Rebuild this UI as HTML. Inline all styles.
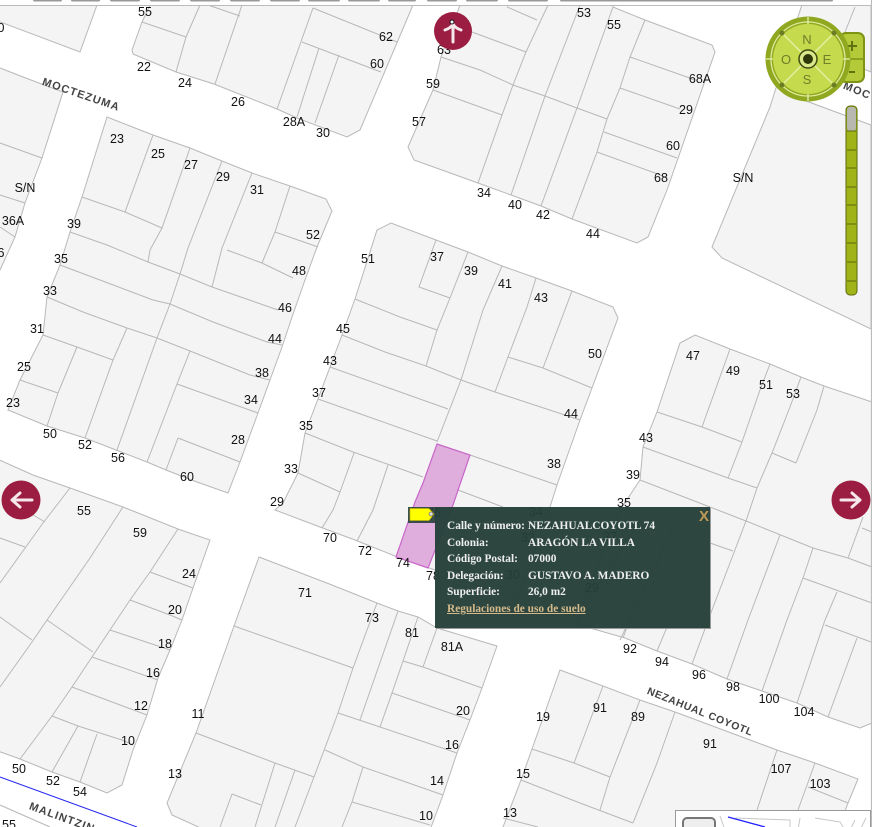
<!DOCTYPE html>
<html><head><meta charset="utf-8"><style>
html,body{margin:0;padding:0;background:#fff;width:877px;height:827px;overflow:hidden}
#w{position:relative;width:877px;height:827px;overflow:hidden;background:#fff}
svg{position:absolute;left:0;top:0}
.b{fill:#f4f4f4;stroke:#b8b8b8;stroke-width:1}
.l{fill:none;stroke:#b8b8b8;stroke-width:1}
.map{filter:blur(.3px)}
text.n{font:12.5px "Liberation Sans",sans-serif;fill:#111;text-anchor:middle;dominant-baseline:central}
text.s{font:bold 11px "Liberation Sans",sans-serif;fill:#444;letter-spacing:1.1px;text-anchor:middle;dominant-baseline:central}
#p{position:absolute;left:435px;top:507px;width:275px;height:121px;background:rgba(36,63,56,.96);box-shadow:1px 1px 0 #999;font:bold 11.35px "Liberation Serif",serif;color:#eee}
#p div{position:absolute;white-space:nowrap;line-height:14px}
#p .v{left:93px}#p .k{left:12px}
#p a{color:#d4b98a;text-decoration:underline}
</style></head><body><div id="w">
<svg width="877" height="827" viewBox="0 0 877 827">
<g class="map">
<g>
<path class="b" d="M-5 20L80 52L97 5H-5Z"/>
<path class="b" d="M150 5L142 22L132 50L133 54L176 72L214 84L277 109L297 118L347 137L360 130L413 5Z"/>
<path class="l" d="M142 22L186 37L200 5M208 5L240 16M242 5L215 84M186 37L176 72M313 8L277 109M302 42L381 72M319 48L297 117M339 55L315 123M313 8L397 42"/>
<path class="b" d="M460 5L441 57L433 90L408 147L414 160L478 183L511 195L541 206L572 219L637 243L648 237L667 190L715 52L712 45L645 20L613 7V5Z"/>
<path class="l" d="M441 57L480 70L513 85L545 96L577 108L607 119M472 32L526 52M507 7L537 20M548 5L526 52L513 85L502 115L478 183M580 5L545 96L511 195M613 7L577 108L541 206M645 20L630 57L620 88L607 119L597 152L572 219M630 57L687 77L694 80M620 88L680 109M604 132L677 158M597 152L655 173L667 178M433 90L480 107L502 115"/>
<path class="b" d="M802 5L770 107L712 247L722 258L871 329V125L790 95L800 40L855 5Z"/>
<path class="b" d="M802 5L790 40L871 72V5Z"/>
<path class="l" d="M855 7L843 37"/>
<path class="b" d="M-5 66L23 77L63 92L42 158L25 203L15 237L0 270H-5Z"/>
<path class="l" d="M0 143L42 158M0 195L25 203M0 227L15 237"/>
<path class="b" d="M107 117L153 135L190 148L222 161L252 173L290 186L326 199L332 211L317 247L305 280L292 317L282 347L270 380L258 413L240 462L228 493L197 482L166 470L147 462L116 450L85 438L47 426L8 410L20 380L43 335L47 297L60 265L70 232L82 197Z"/>
<path class="l" d="M82 197L125 212L162 228M70 232L107 245L148 262L180 274L212 287L278 310M60 265L100 280L153 300L170 304L213 322L267 342L282 345M47 297L83 312L127 328L157 338L190 351L250 375L270 380M43 335L77 347L113 360M20 380L58 393M77 347L58 393L47 426M127 328L113 360L85 438M180 274L170 304L157 338L117 450M190 351L177 384L147 462M177 384L258 413M178 438L166 470M178 438L240 462M227 250L262 263L293 278M153 135L125 212M190 148L162 228L150 250L148 262M222 161L188 248L180 274M252 173L222 248L212 287M290 186L275 232L262 263M275 232L318 247"/>
<path class="b" d="M-5 458L33 475L70 488L123 507L178 529L210 540L193 588L182 620L170 650L158 678L147 715L133 750L122 785L107 793L80 782L52 772L20 759L-5 750Z"/>
<path class="l" d="M70 488L43 523L0 583M33 515L45 522M0 538L25 547M123 507L90 558L47 620L32 642L0 687M0 617L32 640M47 620L93 652M178 529L150 572L130 600L110 630L92 657L72 687L52 716L20 759M150 572L193 588M130 600L170 615L182 620M110 630L170 650M92 657L158 680M72 687L147 715M52 716L78 726L122 740L133 745M78 726L52 772M97 734L80 782"/>
<path class="l" d="M0 805L50 827"/>
<path fill="none" stroke="#2a2af0" stroke-width="1" d="M0 777L137 827"/>
<path class="b" d="M259 557L332 585L377 603L398 611L418 617L437 628L497 646L482 688L470 720L457 753L443 795L430 830H205L172 815L167 803L196 733L234 626Z"/>
<path class="l" d="M234 626L353 668M196 733L275 763L314 777M377 603L353 668L338 713L314 777L295 827M398 611L360 720M418 617L403 661L392 693L380 727M437 628L423 667M403 661L423 667L482 688M392 693L470 720M338 713L380 727L457 753M325 750L363 767L443 795M363 767L352 802L342 827M352 802L430 825M275 763L255 827M295 770L275 827M232 794L261 805M232 794L220 827"/>
<path class="b" d="M377 230L391 223L436 240L468 252L502 266L536 278L572 291L613 307L618 318L592 388L580 420L557 485L550 507L516 600L435 570L395 556L355 540L320 527L275 510L283 503L298 473L305 433L318 399L330 367L342 335L355 299Z"/>
<path class="l" d="M436 240L419 287L450 298M468 252L450 298L437 330L426 366M355 299L400 317L437 330M502 266L483 310L461 380L437 442M536 278L527 307L508 357L495 392M572 291L543 368M508 357L543 368L592 388M342 335L385 352L426 366L461 380L495 392L580 420M330 367L448 409M318 399L437 441M305 433L353 452L390 465L423 477M470 455L557 485M458 490L503 507M298 473L340 492M354 453L340 492L333 510L322 528M388 465L373 510L357 541"/>
<path class="b" d="M680 343L695 335L730 349L770 364L801 377L824 386L872 402V723L860 728L828 717L797 703L762 691L727 679L692 664L657 651L625 638L590 628L576 622L620 510L640 480L643 447L657 412Z"/>
<path class="l" d="M730 349L702 427M770 364L760 390L742 442L728 478M657 412L702 427L742 442M801 377L790 407L772 453L757 488L746 521L712 610L692 664M824 386L817 410L796 463M772 453L796 463M643 447L728 478L757 488M640 480L710 507L746 521L813 548L848 558L872 567M710 543L733 551M780 535L748 620L727 679M813 548L803 578L787 620L762 691M803 578L872 603M837 592L825 620L797 703M848 558L863 517M862 528L872 532M825 625L871 642M857 638L828 717M670 620L657 651M627 627L623 638M640 520L575 622M672 530L620 640"/>
<path class="b" d="M560 670L603 686L640 700L675 712L777 750L815 763L858 779L848 803L838 830H500L503 827L521 780L532 749Z"/>
<path class="l" d="M532 749L574 763L610 777M603 686L574 763M640 700L610 777L600 810M675 712L657 763L633 823M521 780L580 803L633 823M503 818L538 827M777 750L757 810M815 763L798 810M808 787L848 803"/>
<path fill="#dfaedd" stroke="#c966c9" stroke-width="1.2" d="M437 444L470 455L453 505L428 568L396 557L415 502L423 483Z"/>
</g>
<g>
<text class="n" x="1" y="28">0</text><text class="n" x="145" y="12">55</text><text class="n" x="144" y="67">22</text><text class="n" x="185" y="83">24</text><text class="n" x="238" y="102">26</text><text class="n" x="294" y="122">28A</text><text class="n" x="323" y="133">30</text><text class="n" x="386" y="37">62</text><text class="n" x="377" y="64">60</text>
<text class="n" x="584" y="13">53</text><text class="n" x="614" y="25">55</text><text class="n" x="700" y="79">68A</text><text class="n" x="433" y="84">59</text><text class="n" x="419" y="122">57</text><text class="n" x="686" y="110">29</text><text class="n" x="673" y="146">60</text><text class="n" x="661" y="178">68</text><text class="n" x="484" y="193">34</text><text class="n" x="515" y="205">40</text><text class="n" x="543" y="215">42</text><text class="n" x="593" y="234">44</text><text class="n" x="444" y="50">63</text>
<text class="n" x="25" y="188">S/N</text><text class="n" x="13" y="221">36A</text><text class="n" x="117" y="139">23</text><text class="n" x="158" y="154">25</text><text class="n" x="191" y="165">27</text><text class="n" x="223" y="177">29</text><text class="n" x="257" y="190">31</text><text class="n" x="74" y="224">39</text><text class="n" x="313" y="235">52</text><text class="n" x="299" y="271">48</text><text class="n" x="285" y="308">46</text><text class="n" x="275" y="339">44</text><text class="n" x="262" y="373">38</text><text class="n" x="251" y="400">34</text><text class="n" x="238" y="440">28</text><text class="n" x="187" y="477">60</text><text class="n" x="118" y="458">56</text><text class="n" x="85" y="445">52</text><text class="n" x="50" y="434">50</text><text class="n" x="13" y="403">23</text><text class="n" x="24" y="367">25</text><text class="n" x="37" y="329">31</text><text class="n" x="50" y="291">33</text><text class="n" x="61" y="259">35</text><text class="n" x="1" y="253">6</text>
<text class="n" x="368" y="259">51</text><text class="n" x="437" y="257">37</text><text class="n" x="471" y="271">39</text><text class="n" x="505" y="284">41</text><text class="n" x="541" y="298">43</text><text class="n" x="595" y="354">50</text><text class="n" x="343" y="329">45</text><text class="n" x="330" y="361">43</text><text class="n" x="319" y="393">37</text><text class="n" x="306" y="426">35</text><text class="n" x="291" y="469">33</text><text class="n" x="277" y="502">29</text><text class="n" x="571" y="414">44</text><text class="n" x="554" y="464">38</text><text class="n" x="330" y="538">70</text><text class="n" x="365" y="551">72</text><text class="n" x="403" y="563">74</text><text class="n" x="433" y="576">78</text><text class="n" x="536" y="512">34</text><text class="n" x="528" y="538">32</text><text class="n" x="513" y="575">30</text><text class="n" x="592" y="588">29</text><text class="n" x="610" y="537">37</text><text class="n" x="434" y="513">76</text>
<text class="n" x="743" y="178">S/N</text><text class="n" x="693" y="356">47</text><text class="n" x="733" y="371">49</text><text class="n" x="766" y="385">51</text><text class="n" x="793" y="394">53</text><text class="n" x="646" y="438">43</text><text class="n" x="633" y="475">39</text><text class="n" x="624" y="503">35</text>
<text class="n" x="84" y="511">55</text><text class="n" x="140" y="533">59</text><text class="n" x="189" y="574">24</text><text class="n" x="175" y="610">20</text><text class="n" x="165" y="644">18</text><text class="n" x="153" y="673">16</text><text class="n" x="141" y="706">12</text><text class="n" x="128" y="741">10</text><text class="n" x="19" y="769">50</text><text class="n" x="53" y="781">52</text><text class="n" x="80" y="792">54</text><text class="n" x="9" y="825">55</text>
<text class="n" x="305" y="593">71</text><text class="n" x="372" y="618">73</text><text class="n" x="412" y="633">81</text><text class="n" x="452" y="647">81A</text><text class="n" x="463" y="711">20</text><text class="n" x="452" y="745">16</text><text class="n" x="437" y="781">14</text><text class="n" x="426" y="816">10</text><text class="n" x="198" y="714">11</text><text class="n" x="175" y="774">13</text>
<text class="n" x="630" y="649">92</text><text class="n" x="662" y="662">94</text><text class="n" x="699" y="675">96</text><text class="n" x="733" y="687">98</text><text class="n" x="769" y="699">100</text><text class="n" x="804" y="712">104</text><text class="n" x="543" y="717">19</text><text class="n" x="600" y="708">91</text><text class="n" x="638" y="717">89</text><text class="n" x="710" y="744">91</text><text class="n" x="523" y="774">15</text><text class="n" x="510" y="813">13</text><text class="n" x="781" y="769">107</text><text class="n" x="820" y="784">103</text>
<text class="s" transform="translate(81 95) rotate(19)">MOCTEZUMA</text>
<text class="s" transform="translate(700 712) rotate(22)" style="font-size:10.5px;letter-spacing:.6px">NEZAHUAL COYOTL</text>
<text class="s" transform="translate(62 818) rotate(20)">MALINTZIN</text>
<text class="s" transform="translate(857 91) rotate(22)">MOC</text>
</g>
</g>
<!-- frame and top tabs -->
<rect x="0" y="0" width="871" height="5" fill="#fff"/>
<path stroke="#bbb" stroke-width="1" d="M0 5.5H871"/>
<path stroke="#bbb" stroke-width="1.2" d="M871.5 0V827"/>
<rect x="872" y="0" width="5" height="827" fill="#fff"/>
<g fill="#999"><rect x="33" y="-2" width="29" height="3.5" rx="1.5"/><rect x="71" y="-2" width="29" height="3.5" rx="1.5"/><rect x="110" y="-2" width="30" height="3.5" rx="1.5"/><rect x="150" y="-2" width="30" height="3.5" rx="1.5"/><rect x="190" y="-2" width="30" height="3.5" rx="1.5"/><rect x="230" y="-2" width="30" height="3.5" rx="1.5"/><rect x="270" y="-2" width="30" height="3.5" rx="1.5"/><rect x="308" y="-2" width="32" height="3.5" rx="1.5"/><rect x="348" y="-2" width="32" height="3.5" rx="1.5"/><rect x="388" y="-2" width="28" height="3.5" rx="1.5"/><rect x="427" y="-2" width="30" height="3.5" rx="1.5"/><rect x="466" y="-2" width="32" height="3.5" rx="1.5"/><rect x="508" y="-2" width="40" height="3.5" rx="1.5"/><rect x="560" y="-2" width="273" height="3.5" rx="1.5"/></g>
<!-- nav buttons -->
<circle cx="453" cy="31" r="19" fill="#9b1e42"/>
<path fill="none" stroke="#f4e8ec" stroke-width="3" stroke-linecap="round" stroke-linejoin="round" d="M453 42V25M445 30Q451 28 453 24Q455 28 461 30"/>
<circle cx="452" cy="22" r="2" fill="#fff" stroke="#111"/>
<circle cx="21" cy="500" r="19.5" fill="#9b1e42"/>
<path fill="none" stroke="#f4e8ec" stroke-width="3" stroke-linecap="round" stroke-linejoin="round" d="M32 500H13M20 493L12 500L20 507"/>
<circle cx="851" cy="500" r="19.5" fill="#9b1e42"/>
<path fill="none" stroke="#f4e8ec" stroke-width="3" stroke-linecap="round" stroke-linejoin="round" d="M841 500H860M852 493L860 500L852 507"/>
<!-- compass -->
<rect x="840" y="33" width="24" height="49" rx="6" fill="#b4ca38" stroke="#7d9415" stroke-width="2"/>
<path stroke="#7d9415" stroke-width="1.5" d="M840 59H864"/>
<path stroke="#5f7210" stroke-width="2" d="M847 46H857M852 41V51M849 72H855"/>
<circle cx="808" cy="59" r="42.5" fill="#8fa81f"/>
<circle cx="808" cy="59" r="37" fill="none" stroke="#dfe99a" stroke-width="1.3"/>
<circle cx="808" cy="59" r="35" fill="#c5da4d"/>
<path stroke="#e8f0a8" stroke-width="1.3" d="M782 33L834 85M834 33L782 85M808 17V24M808 94V101M766 59H773M843 59H850"/>
<g fill="#6a7c24"><circle cx="782" cy="33" r="2.5"/><circle cx="834" cy="33" r="2.5"/><circle cx="782" cy="85" r="2.5"/><circle cx="834" cy="85" r="2.5"/></g>
<circle cx="808" cy="59" r="9" fill="#dbe88a" stroke="#3d4a10" stroke-width="1.5"/>
<circle cx="808" cy="59" r="5" fill="#2e3808"/>
<g font-family="Liberation Sans,sans-serif" font-size="13" fill="#6f7f2a" text-anchor="middle"><text x="807" y="44">N</text><text x="807" y="84">S</text><text x="786" y="64">O</text><text x="827" y="64">E</text></g>
<!-- slider -->
<rect x="846" y="106" width="11" height="189" rx="4" fill="#a0b318" stroke="#5a6a0a"/>
<rect x="847" y="107" width="9" height="24" rx="3" fill="#b8b8b0"/>
<path stroke="#5a6a0a" stroke-width="1" d="M847 131H856M847 150H856M847 168H856M847 187H856M847 205H856M847 224H856M847 243H856M847 262H856M847 281H856"/>
<!-- yellow tag -->
<rect x="408" y="507" width="28" height="16" fill="#27413a" opacity=".9"/>
<path fill="#ffff00" stroke="#c8b400" stroke-width=".6" d="M410 508.5H429L434 514L429 520.5H410Z"/>
<circle cx="431" cy="514" r="2" fill="#ddd" stroke="#555" stroke-width=".6"/>
<!-- minimap -->
<rect x="675.5" y="810.5" width="195" height="20" fill="#fff" stroke="#999"/>
<rect x="683" y="818" width="32" height="20" rx="4" fill="#eee" stroke="#777" stroke-width="2"/>
<path fill="none" stroke="#c8c8c8" d="M720 816L725 830M735 818L790 820V830M800 818L798 830M815 818L840 822L845 830M855 820L850 830M866 818L860 830"/>
<path fill="none" stroke="#22f" stroke-width="1.3" d="M728 817L765 827"/>
</svg>
<div id="p">
<div class="k" style="top:12px">Calle y número:</div><div class="v" style="top:12px">NEZAHUALCOYOTL 74</div>
<div class="k" style="top:29px">Colonia:</div><div class="v" style="top:29px">ARAGÓN LA VILLA</div>
<div class="k" style="top:45px">Código Postal:</div><div class="v" style="top:45px">07000</div>
<div class="k" style="top:62px">Delegación:</div><div class="v" style="top:62px">GUSTAVO A. MADERO</div>
<div class="k" style="top:78px">Superficie:</div><div class="v" style="top:78px">26,0 m2</div>
<div class="k" style="top:95px"><a>Regulaciones de uso de suelo</a></div>
<div style="left:264px;top:3px;font:bold 15px 'Liberation Sans',sans-serif;line-height:14px;color:#c09a55">X</div>
</div>
</div></body></html>
